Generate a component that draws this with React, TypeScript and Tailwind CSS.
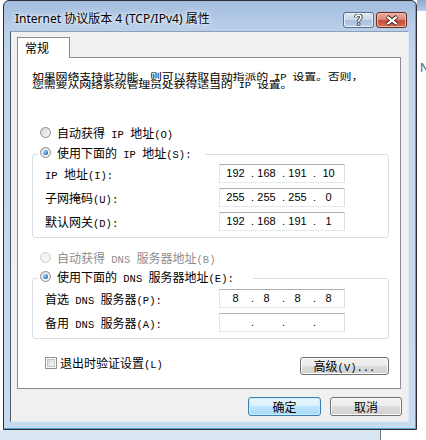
import React from "react";

const ASCII = /^[\x20-\x7e]+$/;

function M({ t }: { t: string }) {
  const parts = t.split(/([\x20-\x7e]+)/).filter((p) => p.length > 0);
  return (
    <>
      {parts.map((p, i) =>
        ASCII.test(p) ? (
          <span key={i} className="whitespace-pre font-['Liberation_Mono',monospace] text-[10.5px] leading-[0px]">
            {p}
          </span>
        ) : (
          <span key={i} className="font-['Noto_Sans_CJK_SC',sans-serif] text-[12px]">
            {p}
          </span>
        )
      )}
    </>
  );
}

function Radio({ checked, disabled }: { checked?: boolean; disabled?: boolean }) {
  return (
    <span
      className={`flex h-[11px] w-[11px] shrink-0 items-center justify-center rounded-full border ${
        disabled
          ? "border-[#cfcfcf] bg-[#f3f3f3]"
          : "border-[#8b8b8b] bg-[linear-gradient(135deg,#d6d6d6,#f8f8f8)]"
      }`}
    >
      {checked && (
        <span className="flex h-[7px] w-[7px] items-center justify-center rounded-full bg-[#f4f8fc]">
          <span className="h-[5px] w-[5px] rounded-full bg-[radial-gradient(circle_at_35%_35%,#a6dcfb,#1d62b8_75%)]" />
        </span>
      )}
    </span>
  );
}

function RadioRow({ label, checked, disabled }: { label: string; checked?: boolean; disabled?: boolean }) {
  return (
    <div className={`flex h-[12px] items-start gap-[6px] leading-[12px] ${disabled ? "text-[#8d8d8d]" : "text-black"}`}>
      <Radio checked={checked} disabled={disabled} />
      <span className="whitespace-nowrap">
        <M t={label} />
      </span>
    </div>
  );
}

function IpField({ v }: { v: string[] }) {
  return (
    <div className="flex h-[19px] w-[126px] shrink-0 items-center border border-t-[#abadb3] border-l-[#e2e3ea] border-r-[#dbdfe6] border-b-[#e3e9ef] bg-white pl-[2px] font-['Liberation_Sans',sans-serif] text-[11px] leading-none text-black">
      <span className="w-[27px] text-center">{v[0]}</span>
      <span className="w-[4px] whitespace-nowrap pl-[2px]">.</span>
      <span className="w-[27px] text-center">{v[1]}</span>
      <span className="w-[4px] whitespace-nowrap pl-[2px]">.</span>
      <span className="w-[27px] text-center">{v[2]}</span>
      <span className="w-[4px] whitespace-nowrap pl-[2px]">.</span>
      <span className="w-[27px] text-center">{v[3]}</span>
    </div>
  );
}

function FieldRow({ label, v }: { label: string; v: string[] }) {
  return (
    <div className="flex h-[19px] items-center leading-[12px] text-black">
      <span className="w-[174px] whitespace-nowrap">
        <M t={label} />
      </span>
      <IpField v={v} />
    </div>
  );
}

function Group({
  legend,
  legendWidth,
  rows,
  first,
}: {
  legend: string;
  legendWidth: string;
  rows: { label: string; v: string[] }[];
  first?: boolean;
}) {
  return (
    <fieldset className="rounded-[3px] border border-[#d5dfe5] pb-[6px]">
      <legend className={`ml-[5px] h-[16px] ${legendWidth}`}>
        <div className="pl-[2px] pt-[1px]">
          <RadioRow label={legend} checked />
        </div>
      </legend>
      <div className={`flex flex-col gap-[5px] pl-[12px] ${first ? "mt-[2px]" : "mt-[3px]"}`}>
        {rows.map((r) => (
          <FieldRow key={r.label} label={r.label} v={r.v} />
        ))}
      </div>
    </fieldset>
  );
}

function WinButton({
  children,
  width,
  height,
  primary,
}: {
  children: React.ReactNode;
  width: string;
  height: string;
  primary?: boolean;
}) {
  return (
    <div
      className={`flex shrink-0 items-center justify-center rounded-[3px] border leading-[12px] text-black ${width} ${height} ${
        primary
          ? "border-[#3c7fb1] bg-[linear-gradient(to_bottom,#eaf6fd_0%,#d9f0fc_50%,#bee6fd_50%,#a7d9f5_100%)] shadow-[inset_0_0_0_1px_#c8ecfd]"
          : "border-[#707070] bg-[linear-gradient(to_bottom,#f2f2f2_0%,#ebebeb_50%,#dddddd_50%,#cfcfcf_100%)] shadow-[inset_0_0_0_1px_#fbfbfb]"
      }`}
    >
      {children}
    </div>
  );
}

function TitleBar() {
  return (
    <div className="flex h-[30px] shrink-0 items-start">
      <div className="whitespace-nowrap pl-[11px] pt-[10px] font-['Noto_Sans','Noto_Sans_CJK_SC',sans-serif] text-[12px] leading-[16px] text-black [text-shadow:0_0_6px_#ffffff,0_0_3px_#ffffff]">
        Internet 协议版本 4 (TCP/IPv4) 属性
      </div>
      <div className="ml-auto flex gap-[2px] pr-[9px] pt-[11px]">
        <div className="flex h-[16px] w-[31px] items-center justify-center rounded-[3px] border border-[#5b6e87] bg-[linear-gradient(to_bottom,#dfe9f6_0%,#c6d7ed_50%,#a9c0df_50%,#bad0ea_100%)] shadow-[inset_0_0_0_1px_#e8f0fa]">
          <svg width="9" height="12" viewBox="0 0 9 12">
            <path
              d="M1.8 3.6 C1.8 1.9 3 1.1 4.4 1.1 C6 1.1 7 2 7 3.3 C7 5 4.6 5.1 4.6 7.2"
              fill="none"
              stroke="#3b3b3b"
              strokeWidth="3.4"
            />
            <rect x="2.9" y="8.4" width="3.4" height="3.2" fill="#3b3b3b" />
            <path
              d="M1.8 3.6 C1.8 1.9 3 1.1 4.4 1.1 C6 1.1 7 2 7 3.3 C7 5 4.6 5.1 4.6 7.2"
              fill="none"
              stroke="#ffffff"
              strokeWidth="1.6"
            />
            <rect x="3.7" y="9.2" width="1.8" height="1.6" fill="#ffffff" />
          </svg>
        </div>
        <div className="flex h-[16px] w-[31px] items-center justify-center rounded-[3px] border border-[#6e2a22] bg-[linear-gradient(to_bottom,#eab0a3_0%,#dc8a78_45%,#c54a35_55%,#d7745b_100%)] shadow-[inset_0_0_0_1px_#f0b8a8]">
          <svg width="14" height="11" viewBox="0 0 14 11">
            <path d="M2 1.5 L12 9.5 M12 1.5 L2 9.5" stroke="#3a1a16" strokeWidth="4" />
            <path d="M2.3 1.8 L11.7 9.2 M11.7 1.8 L2.3 9.2" stroke="#ffffff" strokeWidth="2.2" />
          </svg>
        </div>
      </div>
    </div>
  );
}

function Dialog() {
  return (
    <div className="ml-[3px] flex h-[430px] w-[414px] shrink-0 flex-col rounded-t-[6px] border border-[#2e2e2e] bg-[linear-gradient(to_bottom,#a4bddf_0px,#b9cfe9_28px,#c2d6ee_60px,#c6daf0_100%)] shadow-[inset_-1px_-1px_0_#4fa6dd]">
      <TitleBar />
      <div className="ml-[6px] mr-[7px] flex h-[391px] flex-col border border-l-[#4d5866] border-t-[#8aa0ba] border-r-[#dfe9f4] border-b-[#dfe9f4] bg-[#f0f0f0]">
        <div className="relative z-10 ml-[6px] mt-[5px] flex h-[21px] w-[53px] items-start border border-b-0 border-[#898c95] bg-white pl-[7px] pt-[4px] leading-[12px] text-black">
          <M t="常规" />
        </div>
        <div className="-mt-px ml-[6px] flex h-[332px] w-[384px] flex-col border border-[#898c95] bg-white pl-[14px] pr-[11px]">
          <div className="mt-[13px] h-[18px]">
            <p className="origin-top scale-y-[0.78] whitespace-nowrap leading-[11px] tracking-[-0.2px] text-black">
              <M t="如果网络支持此功能，则可以获取自动指派的 IP 设置。否则，" />
              <br />
              <M t="您需要从网络系统管理员处获得适当的 IP 设置。" />
            </p>
          </div>
          <div className="mt-[38px] pl-[8px]">
            <RadioRow label="自动获得 IP 地址(O)" />
          </div>
          <div className="mt-[7px]">
            <Group
              first
              legend="使用下面的 IP 地址(S):"
              legendWidth="w-[167px]"
              rows={[
                { label: "IP 地址(I):", v: ["192", "168", "191", "10"] },
                { label: "子网掩码(U):", v: ["255", "255", "255", "0"] },
                { label: "默认网关(D):", v: ["192", "168", "191", "1"] },
              ]}
            />
          </div>
          <div className="mt-[14px] pl-[8px]">
            <RadioRow label="自动获得 DNS 服务器地址(B)" disabled />
          </div>
          <div className="mt-[6px]">
            <Group
              legend="使用下面的 DNS 服务器地址(E):"
              legendWidth="w-[215px]"
              rows={[
                { label: "首选 DNS 服务器(P):", v: ["8", "8", "8", "8"] },
                { label: "备用 DNS 服务器(A):", v: ["", "", "", ""] },
              ]}
            />
          </div>
          <div className="mt-[18px] flex items-start justify-between">
            <div className="flex h-[12px] items-start gap-[3px] pl-[13px] leading-[12px] text-black">
              <span className="flex h-[12px] w-[12px] shrink-0 items-center justify-center border border-[#8e8f8f] bg-white">
                <span className="h-[8px] w-[8px] border border-[#c2c2c2] bg-[linear-gradient(135deg,#d8d8d8,#f6f6f6)]" />
              </span>
              <span className="whitespace-nowrap">
                <M t="退出时验证设置(L)" />
              </span>
            </div>
            <WinButton width="w-[89px]" height="h-[18px]">
              <span className="whitespace-nowrap">
                <M t="高级(V)..." />
              </span>
            </WinButton>
          </div>
        </div>
        <div className="mt-[8px] flex justify-end gap-[9px] pr-[6px]">
          <WinButton width="w-[73px]" height="h-[19px]" primary>
            <M t="确定" />
          </WinButton>
          <WinButton width="w-[72px]" height="h-[19px]">
            <M t="取消" />
          </WinButton>
        </div>
      </div>
    </div>
  );
}

export default function App() {
  return (
    <div className="flex h-[440px] w-[426px] flex-col overflow-hidden bg-white font-['Noto_Sans_CJK_SC',sans-serif] text-[12px]">
      <div className="flex h-[430px] shrink-0">
        <Dialog />
        <div className="flex min-w-0 flex-1 flex-col overflow-hidden">
          <div className="h-[11px] bg-[linear-gradient(to_bottom,#8eabd2,#b7cce6)]" />
          <div className="ml-[3px] mt-[50px] font-['Noto_Sans',sans-serif] text-[12px] leading-[14px] text-[#4a5b72]">
            N
          </div>
        </div>
      </div>
      <div className="flex h-[10px] shrink-0">
        <div className="w-[380px] bg-[#dae5f2]" />
        <div className="w-px bg-[#6d7886]" />
        <div className="flex-1 bg-white" />
      </div>
    </div>
  );
}
